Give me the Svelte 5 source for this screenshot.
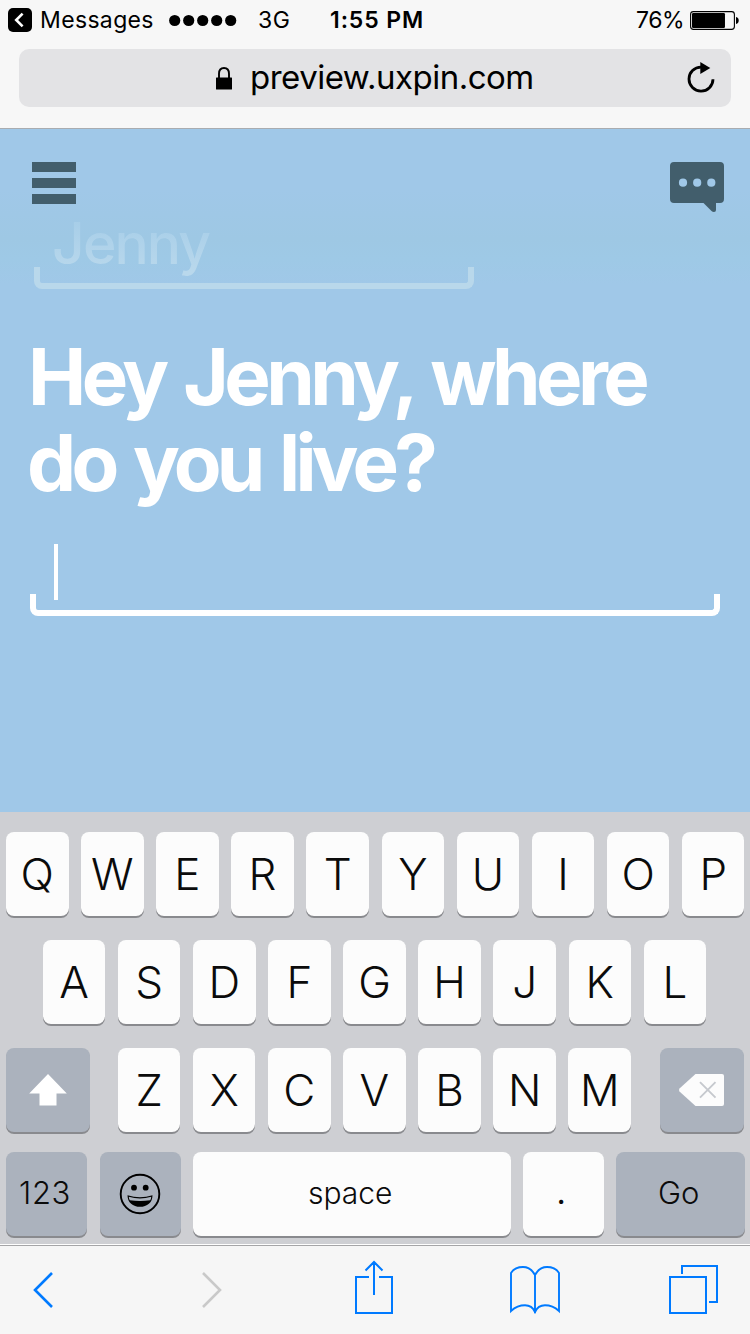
<script lang="ts">
	let answer = '';

	const previousAnswer = 'Jenny';
	const battery = 76;

	const topRow = 'QWERTYUIOP'.split('');
	const homeRow = 'ASDFGHJKL'.split('');
	const bottomRow = 'ZXCVBNM'.split('');

	function press(key: string) {
		answer += key;
	}

	function backspace() {
		answer = answer.slice(0, -1);
	}
</script>

<div class="phone">
	<header class="browser">
		<div class="status">
			<svg width="24" height="24" viewBox="0 0 24 24">
				<rect width="24" height="24" rx="5" fill="#000" />
				<path d="M14.6 5.6 8.2 12l6.4 6.4" fill="none" stroke="#fff" stroke-width="2.6" />
			</svg>
			<span class="messages">Messages</span>
			<svg width="68" height="12" viewBox="0 0 68 12">
				{#each [0, 1, 2, 3, 4] as i}
					<circle cx={5.7 + i * 14} cy="6.5" r="5.6" />
				{/each}
			</svg>
			<span class="network">3G</span>
			<span class="time">1:55 PM</span>
			<span class="percent">{battery}%</span>
			<svg width="49" height="20" viewBox="0 0 49 20">
				<rect x=".6" y="1.6" width="43.8" height="17.8" rx="2.8" fill="none" stroke="#000" stroke-width="1.1" />
				<rect x="2" y="3" width={(battery / 100) * 43.4} height="15" rx="1.2" />
				<path d="M46 7.1c2 .4 2.7 1.8 2.7 3.4s-.7 3-2.7 3.4z" />
			</svg>
		</div>

		<div class="address">
			<svg width="16" height="23" viewBox="0 0 16 23">
				<path d="M3 11V6.8C3 3 5 1 8 1s5 2 5 5.8V11" fill="none" stroke="#000" stroke-width="1.9" />
				<rect y="10.5" width="16" height="12" rx=".5" />
			</svg>
			<span class="url">preview.uxpin.com</span>
			<svg width="28" height="32" viewBox="0 0 28 32">
				<path d="M14 5.1A12 12 0 1 0 26 17.2" fill="none" stroke="#000" stroke-width="2.8" />
				<path d="M13.3 0 23.3 6 13.3 12z" />
			</svg>
		</div>
	</header>

	<main class="page">
		<div class="page-top">
			<button class="menu" aria-label="Menu">
				<span></span>
				<span></span>
				<span></span>
			</button>
			<button aria-label="Chat">
				<svg width="54" height="50" viewBox="0 0 54 50">
					<path
						d="M4 0h46a4 4 0 0 1 4 4v33a4 4 0 0 1-4 4h-4v7q0 2-2 2-1.500 0-2.500-1L33.500 41H4a4 4 0 0 1-4-4V4a4 4 0 0 1 4-4z"
						fill="#425e6c"
					/>
					<circle cx="13" cy="20.7" r="4.1" fill="#a0c8e8" />
					<circle cx="27.2" cy="20.7" r="4.1" fill="#a0c8e8" />
					<circle cx="41.3" cy="20.7" r="4.1" fill="#a0c8e8" />
				</svg>
			</button>
		</div>

		<div class="previous">
			<div class="previous-text">{previousAnswer}</div>
			<div class="bracket"></div>
		</div>

		<h1>
			<span class="first-line">Hey {previousAnswer}, where</span>
			<span class="second-line">do you live?</span>
		</h1>

		<div class="field">
			<div class="field-text">{answer}<span class="caret"></span></div>
			<div class="bracket"></div>
		</div>
	</main>

	<div class="keyboard">
		<div class="row">
			{#each topRow as key}
				<button class="key" on:click={() => press(key)}>{key}</button>
			{/each}
		</div>
		<div class="row home">
			{#each homeRow as key}
				<button class="key" on:click={() => press(key)}>{key}</button>
			{/each}
		</div>
		<div class="row">
			<button class="key dark shift" aria-label="Shift">
				<svg width="38" height="32" viewBox="0 0 38 32">
					<path d="M19 0 37.8 19.5H27.5V31.5h-17V19.5H.2z" fill="#fff" />
				</svg>
			</button>
			{#each bottomRow as key}
				<button class="key" on:click={() => press(key)}>{key}</button>
			{/each}
			<button class="key dark delete" aria-label="Delete" on:click={backspace}>
				<svg width="45" height="32" viewBox="0 0 45 32">
					<path d="M16.5 0H43q2 0 2 2v28q0 2-2 2H16.5L.5 17.5q-1-1.500 0-3z" fill="#fcfcfc" />
					<path d="m21 8.2 15.500 15.500m0-15.500L21 23.700" stroke="#c6c9ce" stroke-width="1.9" />
				</svg>
			</button>
		</div>
		<div class="row last">
			<button class="key dark numbers">123</button>
			<button class="key dark emoji" aria-label="Emoji">
				<svg width="42" height="42" viewBox="0 0 42 42">
					<circle cx="21" cy="21" r="19.3" fill="none" stroke="#000" stroke-width="1.9" />
					<circle cx="15" cy="14.7" r="2.9" />
					<circle cx="26.7" cy="14.7" r="2.9" />
					<path d="M8.5 22.2Q21 26.5 33.5 22.2C33.5 29.5 28 33.8 21 33.8S8.5 29.5 8.5 22.2z" />
					<path d="M9.8 23.8Q21 27.300 32.200 23.800q0 2-1 3.500-10.200 1.500-20.400 0-1-1.500-1-3.500z" fill="#abb2bd" />
				</svg>
			</button>
			<button class="key space" on:click={() => press(' ')}>space</button>
			<button class="key dot" on:click={() => press('.')}>.</button>
			<button class="key dark go">Go</button>
		</div>
	</div>

	<nav class="toolbar">
		<svg class="chevron" width="20" height="36" viewBox="0 0 20 36">
			<path d="M19 1 2 18l17 17" fill="none" stroke="#007aff" stroke-width="2.6" />
		</svg>
		<svg class="chevron" width="20" height="36" viewBox="0 0 20 36">
			<path d="m1 1 17 17L1 35" fill="none" stroke="#c9c9c9" stroke-width="2.6" />
		</svg>
		<svg class="share" width="38" height="53" viewBox="0 0 38 53">
			<path d="M14 16H1v36h36V16H24M19 34V1M10.500 9.500 19 1l8.500 8.500" fill="none" stroke="#007aff" stroke-width="2" />
		</svg>
		<svg class="book" width="50" height="48" viewBox="0 0 50 48">
			<path
				d="M25 47V9C22 3.500 18 1 13 1 8 1 3.500 3 1 7v38c5-4.500 9-5.700 14-5.700 5 0 8 2.200 10 6.700 2-4.500 5-6.700 10-6.700 5 0 9 1.200 14 5.700V7c-2.500-4-7-6-12-6-5 0-9 2.500-12 8"
				fill="none"
				stroke="#007aff"
				stroke-width="1.9"
			/>
		</svg>
		<svg class="tabs" width="50" height="50" viewBox="0 0 50 50">
			<path d="M1 13h36v36H1zM13 10V2h35v36h-8" fill="none" stroke="#007aff" stroke-width="2" />
		</svg>
	</nav>
</div>

<style>
	:global(body) {
		margin: 0;
	}

	.phone {
		display: flex;
		flex-direction: column;
		width: 750px;
		height: 1334px;
		overflow: hidden;
		font-family: Inter, 'Liberation Sans', sans-serif;
		color: #000;
	}

	svg {
		display: block;
		overflow: visible;
	}

	button {
		border: 0;
		padding: 0;
		background: none;
		font-family: inherit;
		color: inherit;
	}

	.browser {
		box-sizing: border-box;
		height: 129px;
		background: #f7f7f7;
		border-bottom: 1px solid #a9acb0;
	}

	.status {
		display: grid;
		grid-template-columns: 32px 129px 89px 72px 306px 54px 49px;
		align-items: center;
		height: 40px;
		padding-left: 8px;
		margin-bottom: 9px;
		font-size: 23px;
		line-height: 40px;
		white-space: nowrap;
	}

	.messages {
		letter-spacing: 0.35px;
	}

	.network {
		letter-spacing: 0.6px;
	}

	.time {
		font-weight: 600;
		letter-spacing: 0.9px;
	}

	.percent {
		letter-spacing: -0.5px;
	}

	.address {
		display: grid;
		grid-template-columns: 34px 437px 28px;
		align-items: center;
		height: 58px;
		margin: 0 19px;
		padding-left: 197px;
		box-sizing: border-box;
		border-radius: 10px;
		background: #e3e3e5;
	}

	.url {
		font-size: 33px;
		line-height: 56px;
		padding-bottom: 2px;
		letter-spacing: -0.5px;
	}

	.page {
		height: 683px;
		background: linear-gradient(#a0c8e8 60px, #9ec8e4 110px, #9ec9e6 130px, #a0c8e8 155px);
		color: #fff;
	}

	.page-top {
		display: flex;
		justify-content: space-between;
		align-items: flex-start;
		height: 50px;
		padding: 33px 26px 4px 32px;
	}

	.menu {
		display: flex;
		flex-direction: column;
		gap: 6px;
		width: 44px;
	}

	.menu span {
		height: 10px;
		background: #425e6c;
	}

	.bracket {
		box-sizing: border-box;
		height: 22px;
		border: 6px solid #fff;
		border-top: 0;
		border-radius: 0 0 8px 8px;
	}

	.previous {
		width: 440px;
		margin-left: 34px;
	}

	.previous .bracket {
		margin-top: -14px;
		border-color: #b9d8eb;
	}

	.previous-text {
		padding: 1px 0 10px 18px;
		font-size: 57px;
		font-weight: 500;
		line-height: 54px;
		letter-spacing: -1.9px;
		background: linear-gradient(#a5cde8, #b9d8ec 85%);
		-webkit-background-clip: text;
		background-clip: text;
		color: transparent;
	}

	h1 {
		margin: 45px 0 38px 28px;
		font-size: 78px;
		font-weight: 750;
		line-height: 86px;
		white-space: nowrap;
	}

	h1 span {
		display: block;
	}

	.first-line {
		letter-spacing: -4.5px;
		word-spacing: 4.5px;
	}

	.second-line {
		margin-left: -1px;
		letter-spacing: -4.7px;
		word-spacing: 4.5px;
	}

	.field {
		width: 690px;
		margin-left: 30px;
	}

	.field .bracket {
		margin-top: -6px;
	}

	.field-text {
		display: flex;
		height: 56px;
		padding-left: 24px;
		font-size: 57px;
		font-weight: 500;
		line-height: 52px;
	}

	.caret {
		width: 4px;
		height: 56px;
		background: #fff;
	}

	.keyboard {
		box-sizing: border-box;
		height: 432px;
		padding: 20px 5.5px 0 6px;
		background: #cecfd3;
	}

	.row {
		display: flex;
		justify-content: space-between;
		height: 84px;
		margin-bottom: 24px;
	}

	.row.home {
		padding: 0 38.3px 0 36.9px;
	}

	.row:nth-child(3) {
		margin-bottom: 20px;
	}

	.key {
		display: flex;
		align-items: center;
		justify-content: center;
		flex: none;
		width: 62.5px;
		height: 84px;
		border-radius: 8px;
		background: #fcfcfc;
		box-shadow: 0 2px 0 #898a8e;
		font-size: 44px;
		font-weight: 300;
		color: #0b0b0b;
	}

	.dark {
		background: #abb2bd;
	}

	.shift,
	.delete {
		width: 84px;
	}

	.shift {
		margin-right: 15.3px;
	}

	.delete {
		box-sizing: border-box;
		margin-left: 16.9px;
		padding-right: 1px;
	}

	.numbers,
	.emoji {
		box-sizing: border-box;
		width: 81px;
	}

	.numbers,
	.space,
	.go {
		box-sizing: border-box;
		font-size: 31px;
		padding-bottom: 3px;
	}

	.numbers {
		padding-right: 3px;
		letter-spacing: 0.6px;
	}

	.space {
		width: 317.5px;
		padding-right: 3px;
		font-size: 30px;
	}

	.dot {
		box-sizing: border-box;
		width: 80.5px;
		font-size: 40px;
		padding-bottom: 10px;
		padding-right: 4px;
	}

	.go {
		width: 128.5px;
		padding-right: 3px;
	}

	.toolbar {
		box-sizing: border-box;
		display: grid;
		grid-template-columns: 169px 153px 155px 159px 50px;
		align-items: center;
		height: 90px;
		padding-left: 33px;
		border-top: 1px solid #fff;
		background: #f6f6f6;
		box-shadow: inset 0 1px 0 #a5a5a7;
	}

	.chevron,
	.book {
		margin-top: 1px;
	}

	.share {
		margin-bottom: 4px;
	}

	.tabs {
		margin-bottom: 1px;
	}
</style>
